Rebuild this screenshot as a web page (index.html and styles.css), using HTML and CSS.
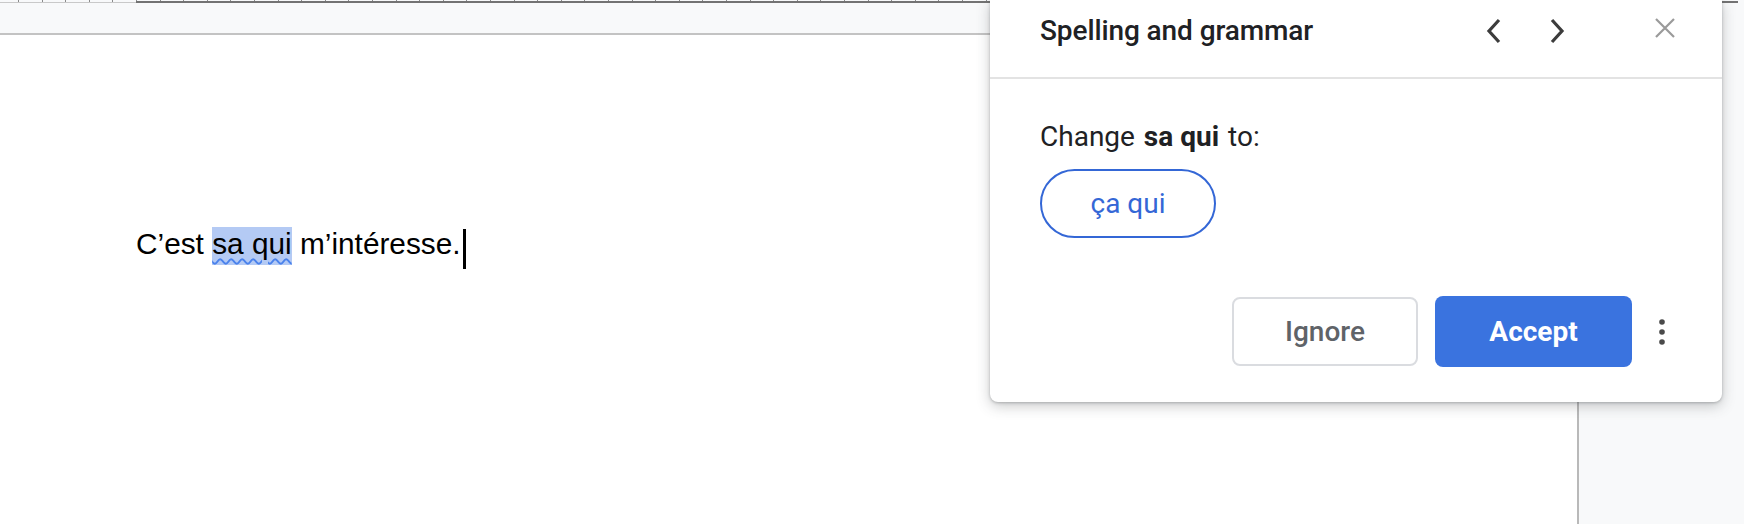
FILE: index.html
```html
<!DOCTYPE html>
<html lang="en">
<head>
    <meta charset="UTF-8">
    <title>Spelling and grammar</title>
    <link rel="stylesheet" href="styles.css">
</head>
<body>
    <div class="app">
        <div class="ruler"><div class="ticks"></div></div>
        <div class="workspace">
            <div class="page">
                <p class="line">C’est <span class="flagged">sa qui</span> m’intéresse.<span class="caret"></span></p>
            </div>
            <div class="gutter"></div>
        </div>
    </div>

    <aside class="spell-panel">
        <header class="panel-head">
            <h2>Spelling and grammar</h2>
            <button class="icon-btn prev" title="Previous">
                <svg width="16" height="26" viewBox="0 0 16 26"><polyline points="13,2 3,13 13,24" fill="none" stroke="#3c3c3c" stroke-width="3.2"/></svg>
            </button>
            <button class="icon-btn next" title="Next">
                <svg width="16" height="26" viewBox="0 0 16 26"><polyline points="3,2 13,13 3,24" fill="none" stroke="#3c3c3c" stroke-width="3.2"/></svg>
            </button>
            <button class="icon-btn close" title="Close">
                <svg width="22" height="22" viewBox="0 0 22 22"><path d="M2 2L20 20M20 2L2 20" stroke="#9a9a9a" stroke-width="2.2"/></svg>
            </button>
        </header>
        <div class="panel-body">
            <p class="prompt">Change <b>sa qui</b> to:</p>
            <button class="suggestion">ça qui</button>
            <div class="actions">
                <button class="btn-ignore">Ignore</button>
                <button class="btn-accept">Accept</button>
                <button class="more" title="More">
                    <svg width="8" height="28" viewBox="0 0 8 28"><circle cx="4" cy="4" r="2.8" fill="#4a4a4a"/><circle cx="4" cy="14" r="2.8" fill="#4a4a4a"/><circle cx="4" cy="24" r="2.8" fill="#4a4a4a"/></svg>
                </button>
            </div>
        </div>
    </aside>
</body>
</html>
```

FILE: styles.css
```css
* {
    margin: 0;
    padding: 0;
    box-sizing: border-box;
}

body {
    width: 1744px;
    height: 524px;
    overflow: hidden;
    background: #f8f9fa;
    font-family: 'Roboto', 'Liberation Sans', sans-serif;
    position: relative;
}

.app {
    display: flex;
    flex-direction: column;
    height: 100%;
}

/* ruler */
.ruler {
    width: 1577px;
    height: 35px;
    border-bottom: 2px solid #c3c3c3;
    position: relative;
}

.ticks {
    width: 1738px;
    height: 3px;
    background:
        linear-gradient(#c9c9c9, #c9c9c9) 0 2px / 136px 1px no-repeat,
        linear-gradient(#737373, #737373) 136px 1px / 1602px 2px no-repeat,
        repeating-linear-gradient(90deg, #8a8a8a 0 1px, transparent 1px 23.6px) 18px 0 / 100% 3px no-repeat;
}

.workspace {
    flex: 1;
    display: flex;
}

.page {
    width: 1579px;
    background: #fff;
    border-right: 2px solid #b9b9b9;
    padding: 190px 0 0 136px;
}

.gutter {
    flex: 1;
}

.line {
    font-family: 'Liberation Sans', Arial, sans-serif;
    font-size: 29.8px;
    line-height: 38px;
    color: #000;
}

.flagged {
    background: #b4caf4;
    padding-bottom: 5px;
    text-decoration: underline wavy #4a82ec;
    text-decoration-thickness: 2px;
    text-underline-offset: 4px;
}

.caret {
    display: inline-block;
    width: 3px;
    height: 40px;
    margin-left: 2px;
    background: #000;
    vertical-align: -15px;
}

/* spelling panel */
.spell-panel {
    position: absolute;
    top: 0;
    left: 990px;
    width: 732px;
    height: 402px;
    background: #fff;
    border-radius: 0 0 8px 8px;
    box-shadow: 0 4px 14px rgba(60, 64, 67, 0.28), 0 1px 3px rgba(60, 64, 67, 0.3);
    color: #202124;
}

.panel-head {
    height: 79px;
    display: flex;
    align-items: center;
    padding: 0 37px 16px 50px;
    border-bottom: 2px solid #e3e3e3;
}

.panel-head h2 {
    flex: 1;
    font-size: 28px;
    font-weight: 500;
    letter-spacing: -0.1px;
}

button {
    font-family: inherit;
    border: none;
    background: none;
    cursor: pointer;
}

.icon-btn {
    width: 40px;
    height: 40px;
    display: flex;
    align-items: center;
    justify-content: center;
}

.next {
    margin-left: 23px;
}

.close {
    margin-left: 68px;
    margin-top: -5px;
}

.panel-body {
    padding: 43px 0 0 50px;
}

.prompt {
    font-size: 28px;
    line-height: 30px;
}

.prompt b {
    font-weight: 700;
    margin: 0 2px;
}

.suggestion {
    margin-top: 17px;
    width: 176px;
    height: 69px;
    border: 2px solid #3467d6;
    border-radius: 35px;
    color: #3467d6;
    font-size: 28px;
}

.actions {
    margin-top: 58px;
    display: flex;
    align-items: center;
    justify-content: flex-end;
    padding-right: 48px;
}

.btn-ignore {
    width: 186px;
    height: 69px;
    border: 2px solid #dadce0;
    border-radius: 8px;
    color: #5f6368;
    font-size: 28px;
    font-weight: 500;
}

.btn-accept {
    margin-left: 17px;
    width: 197px;
    height: 71px;
    border-radius: 8px;
    background: #3a73df;
    color: #fff;
    font-size: 28px;
    font-weight: 700;
}

.more {
    margin-left: 18px;
    width: 24px;
    height: 40px;
    display: flex;
    align-items: center;
    justify-content: center;
}
```
